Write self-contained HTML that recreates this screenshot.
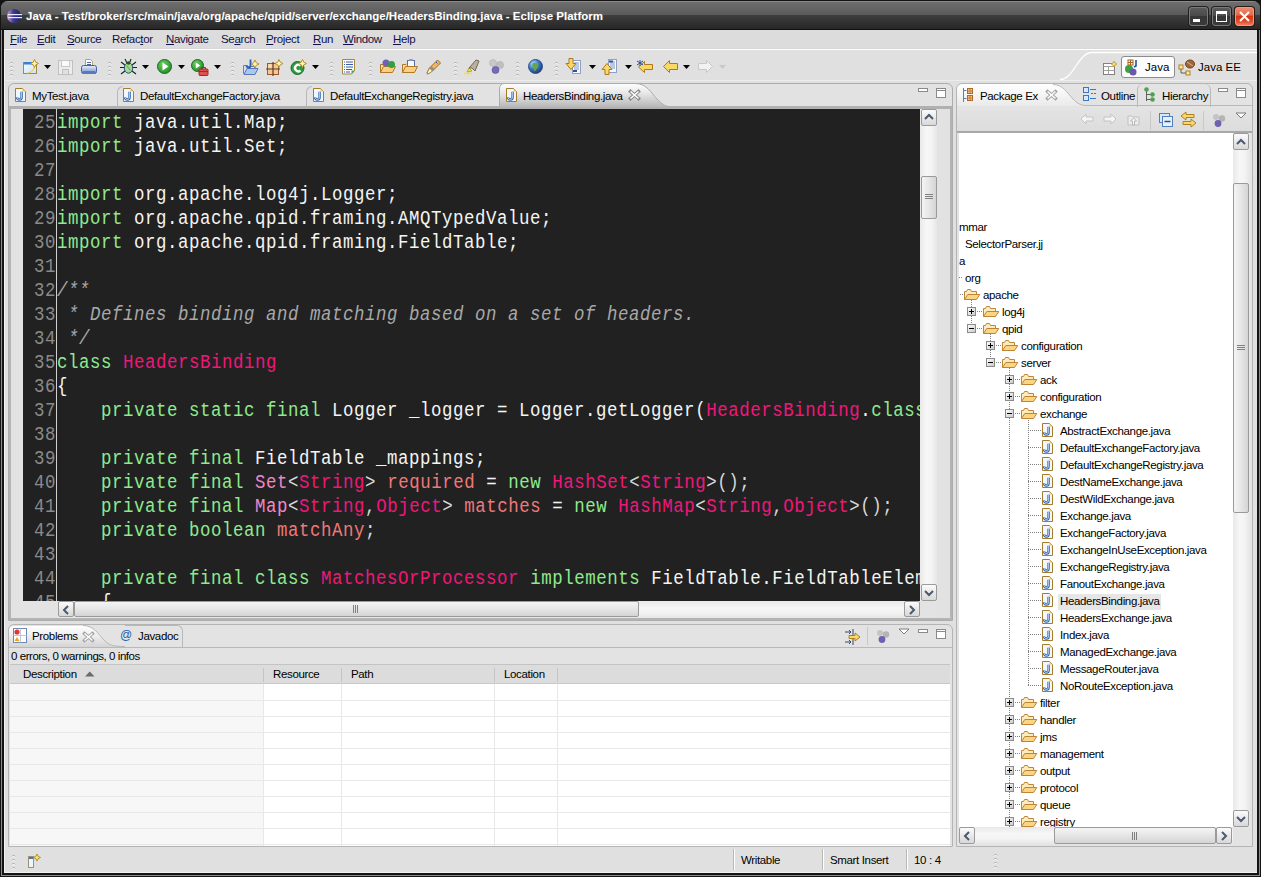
<!DOCTYPE html><html><head><meta charset="utf-8"><style>
*{margin:0;padding:0;box-sizing:border-box}
html,body{width:1261px;height:877px;overflow:hidden;background:#161616}
body{position:relative;font-family:"Liberation Sans",sans-serif;font-size:11px;color:#000;line-height:13px}
.a{position:absolute}
svg{position:absolute;overflow:visible}
.t{position:absolute;white-space:nowrap}
.code{position:absolute;font-family:"Liberation Mono",monospace;font-size:20px;letter-spacing:.644px;line-height:24px;white-space:pre;color:#f4f4f4;transform:scaleX(.87);transform-origin:0 0}
.k{color:#8eea8e}.c{color:#f0167a}.p{color:#f088c8}.f{color:#f07878}.cm{color:#a8a8a8;font-style:italic}.o{color:#d8d8d8}
.ln{position:absolute;font-family:"Liberation Mono",monospace;font-size:20px;letter-spacing:.644px;line-height:24px;white-space:pre;color:#8a8a8a;text-align:right;transform:scaleX(.87);transform-origin:100% 0}
.grip{position:absolute;width:3px;background:repeating-linear-gradient(#bdbdbd 0 1px,#ffffff 1px 2px,transparent 2px 4px)}
.dd{position:absolute;width:0;height:0;border-left:3px solid transparent;border-right:3px solid transparent;border-top:3px solid #000}
.sbv{position:absolute;background:linear-gradient(90deg,#e9e9e9,#f7f7f7 40%,#f3f3f3 70%,#e6e6e6)}
.sbh{position:absolute;background:linear-gradient(#e9e9e9,#f7f7f7 40%,#f3f3f3 70%,#e6e6e6)}
.btn{position:absolute;border:1px solid #9a9a9a;border-radius:2px;background:linear-gradient(#fbfbfb,#e9e9e9 50%,#d8d8d8)}
.thv{position:absolute;border:1px solid #9a9a9a;border-radius:2px;background:linear-gradient(90deg,#f4f4f4,#e6e6e6 50%,#d4d4d4)}
.thh{position:absolute;border:1px solid #9a9a9a;border-radius:2px;background:linear-gradient(#f4f4f4,#e6e6e6 50%,#d4d4d4)}
</style></head><body>
<div class="a" style="left:0;top:0;width:1261px;height:877px;background:#141414"></div>
<div class="a" style="left:1px;top:1px;width:1259px;height:875px;border:1px solid #8a8a8a;border-top:0;border-radius:7px 7px 0 0"></div>
<div class="a" style="left:1px;top:1px;width:1259px;height:29px;border-radius:7px 7px 0 0;background:linear-gradient(#8a8a8a 0 1px,#6e6e6e 1px,#5a5a5a 14px,#3e3e3e 14px,#262626 28px,#101010 28px 29px)"></div>
<svg style="left:7px;top:8px" width="16" height="16"><defs><linearGradient id="eg" x1="0" y1="0" x2="1" y2="0"><stop offset="0" stop-color="#d8a0d8"/><stop offset=".45" stop-color="#3a3a90"/><stop offset="1" stop-color="#20206a"/></linearGradient></defs><circle cx="7" cy="8" r="7" fill="url(#eg)"/><rect x="1" y="6" width="14" height="1.2" fill="#e8e8ff"/><rect x="1" y="9" width="14" height="1.2" fill="#e8e8ff"/></svg>
<div class="t" style="left:26px;top:10px;font-size:11.5px;font-weight:bold;color:#fff;line-height:13px;text-shadow:0 0 2px rgba(255,255,255,.2)">Java - Test/broker/src/main/java/org/apache/qpid/server/exchange/HeadersBinding.java - Eclipse Platform</div>
<div class="a" style="left:1189px;top:7px;width:19px;height:19px;border-radius:3px;border:1px solid #7a7a7a;box-shadow:0 0 0 1px #202020;background:linear-gradient(#5a5a5a,#4a4a4a 45%,#363636 50%,#3a3a3a)"></div>
<div class="a" style="left:1193px;top:19px;width:7px;height:3px;background:#fff"></div>
<div class="a" style="left:1212px;top:7px;width:19px;height:19px;border-radius:3px;border:1px solid #7a7a7a;box-shadow:0 0 0 1px #202020;background:linear-gradient(#5a5a5a,#4a4a4a 45%,#363636 50%,#3a3a3a)"></div>
<div class="a" style="left:1216px;top:11px;width:11px;height:11px;border:1.5px solid #fff;border-top-width:3px"></div>
<div class="a" style="left:1235px;top:7px;width:19px;height:19px;border-radius:3px;border:1px solid #f49a84;box-shadow:0 0 0 1px #2a1a14;background:linear-gradient(#ec8a70 0,#e46a4c 40%,#d83412 50%,#dc4a28 75%,#ec7a5c 100%)"></div>
<svg style="left:1239px;top:11px" width="11" height="11"><path d="M1 1L10 10M10 1L1 10" stroke="#fff" stroke-width="2"/></svg>
<div class="a" style="left:4px;top:30px;width:1253px;height:843px;background:#e0e0e0"></div>
<div class="a" style="left:4px;top:30px;width:1px;height:843px;background:#f2f2f2"></div>
<div class="a" style="left:4px;top:872px;width:1253px;height:1px;background:#f2f2f2"></div>
<div class="a" style="left:4px;top:80px;width:1253px;height:1px;background:#ececec"></div>
<div class="a" style="left:4px;top:30px;width:1253px;height:19px;background:#dcdcdc"></div>
<div class="a" style="left:4px;top:48px;width:1253px;height:1px;background:#d8d8d8"></div>
<div class="a" style="left:4px;top:49px;width:1253px;height:1px;background:#ffffff"></div>
<div class="t" style="left:10px;top:33px;font-size:11.5px;letter-spacing:-.35px;color:#10104a"><u>F</u>ile</div>
<div class="t" style="left:37px;top:33px;font-size:11.5px;letter-spacing:-.35px;color:#10104a"><u>E</u>dit</div>
<div class="t" style="left:67px;top:33px;font-size:11.5px;letter-spacing:-.35px;color:#10104a"><u>S</u>ource</div>
<div class="t" style="left:112px;top:33px;font-size:11.5px;letter-spacing:-.35px;color:#10104a">Refac<u>t</u>or</div>
<div class="t" style="left:166px;top:33px;font-size:11.5px;letter-spacing:-.35px;color:#10104a"><u>N</u>avigate</div>
<div class="t" style="left:221px;top:33px;font-size:11.5px;letter-spacing:-.35px;color:#10104a">Se<u>a</u>rch</div>
<div class="t" style="left:266px;top:33px;font-size:11.5px;letter-spacing:-.35px;color:#10104a"><u>P</u>roject</div>
<div class="t" style="left:313px;top:33px;font-size:11.5px;letter-spacing:-.35px;color:#10104a"><u>R</u>un</div>
<div class="t" style="left:343px;top:33px;font-size:11.5px;letter-spacing:-.35px;color:#10104a"><u>W</u>indow</div>
<div class="t" style="left:393px;top:33px;font-size:11.5px;letter-spacing:-.35px;color:#10104a"><u>H</u>elp</div>
<svg style="left:10px;top:60px" width="3" height="16"><path d="M0 3.5L1.5 2L3 3.5" stroke="#a4a4a4" stroke-width="1" fill="none"/><path d="M0 4.5L1.5 3L3 4.5" stroke="#ffffff" stroke-width="1" fill="none" opacity=".9"/><path d="M0 7.5L1.5 6L3 7.5" stroke="#a4a4a4" stroke-width="1" fill="none"/><path d="M0 8.5L1.5 7L3 8.5" stroke="#ffffff" stroke-width="1" fill="none" opacity=".9"/><path d="M0 11.5L1.5 10L3 11.5" stroke="#a4a4a4" stroke-width="1" fill="none"/><path d="M0 12.5L1.5 11L3 12.5" stroke="#ffffff" stroke-width="1" fill="none" opacity=".9"/><path d="M0 15.5L1.5 14L3 15.5" stroke="#a4a4a4" stroke-width="1" fill="none"/><path d="M0 16.5L1.5 15L3 16.5" stroke="#ffffff" stroke-width="1" fill="none" opacity=".9"/></svg>
<svg style="left:22px;top:59px" width="17" height="17" viewBox="0 0 17 17"><defs><linearGradient id="nw" x1="0" y1="0" x2="1" y2="1"><stop offset="0" stop-color="#f4fbff"/><stop offset="1" stop-color="#c8e4f8"/></linearGradient></defs><rect x="1.5" y="3.5" width="13" height="11" fill="url(#nw)" stroke="#a08850"/><rect x="2" y="3" width="10" height="2.5" fill="#3a80d0"/><path d="M13 5c0 5-3 9-8 9" stroke="#f0d060" fill="none" stroke-width="1.2"/><path d="M12.5 .5l1.3 2.7 2.7 1.3-2.7 1.3-1.3 2.7-1.3-2.7-2.7-1.3 2.7-1.3z" fill="#fff4b0" stroke="#b08818" stroke-width=".9"/></svg>
<svg style="left:44px;top:65px" width="7" height="4"><path d="M0 0H7L3.5 4Z" fill="#000"/></svg>
<svg style="left:58px;top:60px" width="16" height="16" viewBox="0 0 16 16"><rect x=".5" y=".5" width="14" height="14" fill="#ececec" stroke="#c0c0c0"/><rect x="3.5" y=".5" width="8" height="6" fill="#fafafa" stroke="#c8c8c8"/><rect x="4.5" y="9.5" width="6" height="5" fill="#e0e0e0" stroke="#c0c0c0"/></svg>
<svg style="left:81px;top:59px" width="16" height="17" viewBox="0 0 16 17"><defs><linearGradient id="pr" x1="0" y1="0" x2="0" y2="1"><stop offset="0" stop-color="#e8f0fc"/><stop offset="1" stop-color="#7090d0"/></linearGradient></defs><path d="M4.5 .5h5l2 2v5h-7z" fill="#fff" stroke="#c0a060"/><path d="M6 3.5h4M6 5.5h4" stroke="#4868a8"/><rect x=".5" y="6.5" width="15" height="8" rx="2" fill="url(#pr)" stroke="#4060a8"/><rect x="1.5" y="12" width="13" height="3" rx="1" fill="#5878c0"/></svg>
<svg style="left:108px;top:60px" width="3" height="16"><path d="M0 3.5L1.5 2L3 3.5" stroke="#a4a4a4" stroke-width="1" fill="none"/><path d="M0 4.5L1.5 3L3 4.5" stroke="#ffffff" stroke-width="1" fill="none" opacity=".9"/><path d="M0 7.5L1.5 6L3 7.5" stroke="#a4a4a4" stroke-width="1" fill="none"/><path d="M0 8.5L1.5 7L3 8.5" stroke="#ffffff" stroke-width="1" fill="none" opacity=".9"/><path d="M0 11.5L1.5 10L3 11.5" stroke="#a4a4a4" stroke-width="1" fill="none"/><path d="M0 12.5L1.5 11L3 12.5" stroke="#ffffff" stroke-width="1" fill="none" opacity=".9"/><path d="M0 15.5L1.5 14L3 15.5" stroke="#a4a4a4" stroke-width="1" fill="none"/><path d="M0 16.5L1.5 15L3 16.5" stroke="#ffffff" stroke-width="1" fill="none" opacity=".9"/></svg>
<svg style="left:120px;top:59px" width="17" height="17" viewBox="0 0 17 17"><g stroke="#102818" stroke-width="1.1" fill="none"><path d="M1 3l4 3M16 3l-4 3M0 8.5h4M13 8.5h4M1 15l4-3M16 15l-4-3M5 0l2 4M11 0l-1.5 4"/></g><ellipse cx="8.5" cy="9" rx="4.2" ry="5.2" fill="#a8d890" stroke="#205878"/><path d="M6.5 6.5l4 5" stroke="#70a860" stroke-width="1.2"/><circle cx="8.5" cy="4" r="1.8" fill="#305030"/></svg>
<svg style="left:142px;top:65px" width="7" height="4"><path d="M0 0H7L3.5 4Z" fill="#000"/></svg>
<svg style="left:157px;top:59px" width="15" height="15" viewBox="0 0 15 15"><defs><radialGradient id="rg" cx=".4" cy=".35" r=".7"><stop offset="0" stop-color="#70d060"/><stop offset="1" stop-color="#1e8a28"/></radialGradient></defs><circle cx="7.5" cy="7.5" r="7" fill="url(#rg)" stroke="#1a6a22"/><path d="M5.5 3.5v8l6-4z" fill="#fff"/></svg>
<svg style="left:178px;top:65px" width="7" height="4"><path d="M0 0H7L3.5 4Z" fill="#000"/></svg>
<svg style="left:191px;top:59px" width="18" height="17" viewBox="0 0 18 17"><defs><radialGradient id="rg2" cx=".4" cy=".35" r=".7"><stop offset="0" stop-color="#70d060"/><stop offset="1" stop-color="#1e8a28"/></radialGradient></defs><circle cx="6.5" cy="6.5" r="6" fill="url(#rg2)" stroke="#1a6a22"/><path d="M4.8 3.5v6l4.5-3z" fill="#fff"/><rect x="8" y="10" width="9" height="6.5" rx="1" fill="#e05050" stroke="#a02828"/><path d="M10.5 10v-1.5h4v1.5M8 12.5h9" stroke="#a02828" fill="none"/></svg>
<svg style="left:214px;top:65px" width="7" height="4"><path d="M0 0H7L3.5 4Z" fill="#000"/></svg>
<svg style="left:231px;top:60px" width="3" height="16"><path d="M0 3.5L1.5 2L3 3.5" stroke="#a4a4a4" stroke-width="1" fill="none"/><path d="M0 4.5L1.5 3L3 4.5" stroke="#ffffff" stroke-width="1" fill="none" opacity=".9"/><path d="M0 7.5L1.5 6L3 7.5" stroke="#a4a4a4" stroke-width="1" fill="none"/><path d="M0 8.5L1.5 7L3 8.5" stroke="#ffffff" stroke-width="1" fill="none" opacity=".9"/><path d="M0 11.5L1.5 10L3 11.5" stroke="#a4a4a4" stroke-width="1" fill="none"/><path d="M0 12.5L1.5 11L3 12.5" stroke="#ffffff" stroke-width="1" fill="none" opacity=".9"/><path d="M0 15.5L1.5 14L3 15.5" stroke="#a4a4a4" stroke-width="1" fill="none"/><path d="M0 16.5L1.5 15L3 16.5" stroke="#ffffff" stroke-width="1" fill="none" opacity=".9"/></svg>
<svg style="left:242px;top:59px" width="18" height="17" viewBox="0 0 18 17"><path d="M1.5 6.5h4l1 1h6v7h-11z" fill="#d0e0f8" stroke="#6080c0"/><path d="M2 15.5l3-6h11l-3 6z" fill="#a8c8f0" stroke="#5878b8"/><path d="M8.5 .5v6c0 1.5-1 2-2 2s-2-.5-2-2" stroke="#3060b0" stroke-width="1.8" fill="none"/><path d="M13 1l1.3 2.7 2.7 1.3-2.7 1.3-1.3 2.7-1.3-2.7-2.7-1.3 2.7-1.3z" fill="#fff4b0" stroke="#b08818" stroke-width=".9"/></svg>
<svg style="left:266px;top:59px" width="18" height="17" viewBox="0 0 18 17"><rect x="1.5" y="4.5" width="11" height="11" fill="#f0c898" stroke="#9a5a30"/><path d="M7 3v14M0 10h14" stroke="#6a3818" stroke-width="1.2"/><rect x="2.5" y="5.5" width="3" height="3" fill="#f8e0c0"/><path d="M13 .5l1.3 2.7 2.7 1.3-2.7 1.3-1.3 2.7-1.3-2.7-2.7-1.3 2.7-1.3z" fill="#fff4b0" stroke="#b08818" stroke-width=".9"/></svg>
<svg style="left:290px;top:59px" width="17" height="17" viewBox="0 0 17 17"><circle cx="7.5" cy="9" r="6.5" fill="#2e9a3e" stroke="#1a6a22"/><path d="M10.5 6.5a3.3 3.3 0 1 0 0 5" stroke="#fff" stroke-width="2.4" fill="none"/><path d="M12.5 .5l1.3 2.7 2.7 1.3-2.7 1.3-1.3 2.7-1.3-2.7-2.7-1.3 2.7-1.3z" fill="#fff4b0" stroke="#b08818" stroke-width=".9"/></svg>
<svg style="left:312px;top:65px" width="7" height="4"><path d="M0 0H7L3.5 4Z" fill="#000"/></svg>
<svg style="left:330px;top:60px" width="3" height="16"><path d="M0 3.5L1.5 2L3 3.5" stroke="#a4a4a4" stroke-width="1" fill="none"/><path d="M0 4.5L1.5 3L3 4.5" stroke="#ffffff" stroke-width="1" fill="none" opacity=".9"/><path d="M0 7.5L1.5 6L3 7.5" stroke="#a4a4a4" stroke-width="1" fill="none"/><path d="M0 8.5L1.5 7L3 8.5" stroke="#ffffff" stroke-width="1" fill="none" opacity=".9"/><path d="M0 11.5L1.5 10L3 11.5" stroke="#a4a4a4" stroke-width="1" fill="none"/><path d="M0 12.5L1.5 11L3 12.5" stroke="#ffffff" stroke-width="1" fill="none" opacity=".9"/><path d="M0 15.5L1.5 14L3 15.5" stroke="#a4a4a4" stroke-width="1" fill="none"/><path d="M0 16.5L1.5 15L3 16.5" stroke="#ffffff" stroke-width="1" fill="none" opacity=".9"/></svg>
<svg style="left:342px;top:59px" width="14" height="16" viewBox="0 0 14 16"><path d="M.5 .5h12v11l-3 3.5h-9z" fill="#fbfbff" stroke="#a88838"/><path d="M2 3h1M4 3h7M2 5.5h1M4 5.5h7M2 8h1M4 8h7M2 10.5h1M4 10.5h6M2 13h1M4 13h4" stroke="#3860a8"/><path d="M9.5 15v-3.5h3.5z" fill="#50a050"/></svg>
<svg style="left:369px;top:60px" width="3" height="16"><path d="M0 3.5L1.5 2L3 3.5" stroke="#a4a4a4" stroke-width="1" fill="none"/><path d="M0 4.5L1.5 3L3 4.5" stroke="#ffffff" stroke-width="1" fill="none" opacity=".9"/><path d="M0 7.5L1.5 6L3 7.5" stroke="#a4a4a4" stroke-width="1" fill="none"/><path d="M0 8.5L1.5 7L3 8.5" stroke="#ffffff" stroke-width="1" fill="none" opacity=".9"/><path d="M0 11.5L1.5 10L3 11.5" stroke="#a4a4a4" stroke-width="1" fill="none"/><path d="M0 12.5L1.5 11L3 12.5" stroke="#ffffff" stroke-width="1" fill="none" opacity=".9"/><path d="M0 15.5L1.5 14L3 15.5" stroke="#a4a4a4" stroke-width="1" fill="none"/><path d="M0 16.5L1.5 15L3 16.5" stroke="#ffffff" stroke-width="1" fill="none" opacity=".9"/></svg>
<svg style="left:380px;top:59px" width="17" height="16" viewBox="0 0 17 16"><path d="M.5 13.5V5.5H4L5 4.5h6v9z" fill="#f8dca0" stroke="#b07828"/><path d="M.5 13.5l3-6h12l-3 6z" fill="#f8d080" stroke="#b07828"/><circle cx="6" cy="4" r="3.5" fill="#7060b8"/><circle cx="11.5" cy="5.5" r="3.5" fill="#30a040"/></svg>
<svg style="left:402px;top:59px" width="17" height="16" viewBox="0 0 17 16"><path d="M.5 13.5V5.5H4L5 4.5h6v9z" fill="#f8dca0" stroke="#b07828"/><rect x="5.5" y="1.5" width="7" height="6" fill="#f4f8ff" stroke="#6070a0"/><rect x="7" y="0" width="4" height="2" rx="1" fill="#9098c0"/><path d="M.5 13.5l3-6h12l-3 6z" fill="#f8d080" stroke="#b07828"/></svg>
<svg style="left:425px;top:59px" width="17" height="16" viewBox="0 0 17 16"><path d="M2 14l2.5-5 8-8 3 3-8 8z" fill="#f0b860" stroke="#a06820"/><path d="M4.5 9l3 3-3.5 2.5-2 .5.5-2z" fill="#fff8d0" stroke="#a08040"/><path d="M5.5 8l3 3" stroke="#909090" stroke-width="2.5"/><path d="M11 3l1.5 1.5" stroke="#3050a0"/></svg>
<svg style="left:454px;top:60px" width="3" height="16"><path d="M0 3.5L1.5 2L3 3.5" stroke="#a4a4a4" stroke-width="1" fill="none"/><path d="M0 4.5L1.5 3L3 4.5" stroke="#ffffff" stroke-width="1" fill="none" opacity=".9"/><path d="M0 7.5L1.5 6L3 7.5" stroke="#a4a4a4" stroke-width="1" fill="none"/><path d="M0 8.5L1.5 7L3 8.5" stroke="#ffffff" stroke-width="1" fill="none" opacity=".9"/><path d="M0 11.5L1.5 10L3 11.5" stroke="#a4a4a4" stroke-width="1" fill="none"/><path d="M0 12.5L1.5 11L3 12.5" stroke="#ffffff" stroke-width="1" fill="none" opacity=".9"/><path d="M0 15.5L1.5 14L3 15.5" stroke="#a4a4a4" stroke-width="1" fill="none"/><path d="M0 16.5L1.5 15L3 16.5" stroke="#ffffff" stroke-width="1" fill="none" opacity=".9"/></svg>
<svg style="left:464px;top:59px" width="17" height="16" viewBox="0 0 17 16"><path d="M0 14.5h8" stroke="#f0e040" stroke-width="1.5"/><path d="M3 13l2-4 3 3z" fill="#f8e040" stroke="#b09820" stroke-width=".8"/><path d="M5 9l7-8 3 1-4 10-3-3z" fill="#b8b0a0" stroke="#706850"/></svg>
<svg style="left:489px;top:59px" width="15" height="15" viewBox="0 0 15 15"><circle cx="4" cy="4" r="3.5" fill="#c8c8c8" stroke="#b0b0b0" stroke-width=".6"/><circle cx="11" cy="6" r="3.5" fill="#c0c0c0" stroke="#a8a8a8" stroke-width=".6"/><circle cx="6.5" cy="11" r="3.5" fill="#7a68b8" stroke="#5a4a98" stroke-width=".6"/></svg>
<svg style="left:516px;top:60px" width="3" height="16"><path d="M0 3.5L1.5 2L3 3.5" stroke="#a4a4a4" stroke-width="1" fill="none"/><path d="M0 4.5L1.5 3L3 4.5" stroke="#ffffff" stroke-width="1" fill="none" opacity=".9"/><path d="M0 7.5L1.5 6L3 7.5" stroke="#a4a4a4" stroke-width="1" fill="none"/><path d="M0 8.5L1.5 7L3 8.5" stroke="#ffffff" stroke-width="1" fill="none" opacity=".9"/><path d="M0 11.5L1.5 10L3 11.5" stroke="#a4a4a4" stroke-width="1" fill="none"/><path d="M0 12.5L1.5 11L3 12.5" stroke="#ffffff" stroke-width="1" fill="none" opacity=".9"/><path d="M0 15.5L1.5 14L3 15.5" stroke="#a4a4a4" stroke-width="1" fill="none"/><path d="M0 16.5L1.5 15L3 16.5" stroke="#ffffff" stroke-width="1" fill="none" opacity=".9"/></svg>
<svg style="left:528px;top:59px" width="15" height="15" viewBox="0 0 15 15"><defs><radialGradient id="gl" cx=".35" cy=".3" r=".75"><stop offset="0" stop-color="#c0e0ff"/><stop offset=".5" stop-color="#3a78c8"/><stop offset="1" stop-color="#1a3a80"/></radialGradient></defs><circle cx="7.5" cy="7.5" r="7" fill="url(#gl)" stroke="#203c78" stroke-width=".8"/><path d="M5 4c2-1 3 1 4 0s2 2 1 4-2 3-3 4-1-3-2-4-1-3 0-4z" fill="#60a848"/><circle cx="9" cy="11" r=".8" fill="#c02020"/></svg>
<svg style="left:555px;top:60px" width="3" height="16"><path d="M0 3.5L1.5 2L3 3.5" stroke="#a4a4a4" stroke-width="1" fill="none"/><path d="M0 4.5L1.5 3L3 4.5" stroke="#ffffff" stroke-width="1" fill="none" opacity=".9"/><path d="M0 7.5L1.5 6L3 7.5" stroke="#a4a4a4" stroke-width="1" fill="none"/><path d="M0 8.5L1.5 7L3 8.5" stroke="#ffffff" stroke-width="1" fill="none" opacity=".9"/><path d="M0 11.5L1.5 10L3 11.5" stroke="#a4a4a4" stroke-width="1" fill="none"/><path d="M0 12.5L1.5 11L3 12.5" stroke="#ffffff" stroke-width="1" fill="none" opacity=".9"/><path d="M0 15.5L1.5 14L3 15.5" stroke="#a4a4a4" stroke-width="1" fill="none"/><path d="M0 16.5L1.5 15L3 16.5" stroke="#ffffff" stroke-width="1" fill="none" opacity=".9"/></svg>
<svg style="left:566px;top:58px" width="16" height="17" viewBox="0 0 16 17"><rect x="6.5" y="2.5" width="8" height="13" fill="#f4f8ff" stroke="#90a0c0"/><path d="M8 5h5M8 7h5M8 9h5M8 11h5" stroke="#8098c8"/><rect x="7" y="12" width="4" height="2" fill="#3050a0"/><path d="M3 .5h4v5h3l-5 6-5-6h3z" fill="#f8d868" stroke="#b07818"/></svg>
<svg style="left:589px;top:65px" width="7" height="4"><path d="M0 0H7L3.5 4Z" fill="#000"/></svg>
<svg style="left:602px;top:58px" width="16" height="17" viewBox="0 0 16 17"><rect x="6.5" y="1.5" width="8" height="13" fill="#f4f8ff" stroke="#90a0c0"/><path d="M8 4h5M8 6h5M8 8h5M8 10h5" stroke="#8098c8"/><rect x="7" y="2.5" width="4" height="2" fill="#3050a0"/><path d="M5 5.5l5 6h-3v5h-4v-5h-3z" fill="#f8d868" stroke="#b07818"/></svg>
<svg style="left:625px;top:65px" width="7" height="4"><path d="M0 0H7L3.5 4Z" fill="#000"/></svg>
<svg style="left:637px;top:60px" width="17" height="13" viewBox="0 0 17 13"><path d="M7.5 1.5v3h8v5h-8v3l-6-5.5z" fill="#f8d868" stroke="#b07818"/><path d="M3 0v6M0 1l6 4M6 1l-6 4" stroke="#2050a0" stroke-width="1"/></svg>
<svg style="left:663px;top:60px" width="15" height="13" viewBox="0 0 15 13"><path d="M6.5 .5v3h8v6h-8v3l-6-6z" fill="#f8d868" stroke="#b07818"/></svg>
<svg style="left:683px;top:65px" width="7" height="4"><path d="M0 0H7L3.5 4Z" fill="#000"/></svg>
<svg style="left:698px;top:60px" width="15" height="13" viewBox="0 0 15 13"><path d="M8.5 .5v3h-8v6h8v3l6-6z" fill="#f2f2f2" stroke="#c8c8c8"/></svg>
<svg style="left:719px;top:65px" width="7" height="4"><path d="M0 0H7L3.5 4Z" fill="#c8c8c8"/></svg>
<svg style="left:1060px;top:51px" width="200" height="33"><path d="M0 28.5 C14 28.5 18 1.5 32 1.5 H197" fill="none" stroke="#ffffff" stroke-width="1.3"/></svg>
<svg style="left:1102px;top:60px" width="16" height="16" viewBox="0 0 16 16"><rect x="1.5" y="3.5" width="11" height="11" fill="#fff" stroke="#808080"/><path d="M1.5 6.5h11M6.5 6.5v8M1.5 10.5h11" stroke="#a0a0a0"/><path d="M12 1l1 2 2 1-2 1-1 2-1-2-2-1 2-1z" fill="#f8e060" stroke="#c09020" stroke-width=".7"/></svg>
<div class="a" style="left:1121px;top:56px;width:54px;height:22px;border:1px solid #8c8c8c;border-radius:3px;background:#fdfdfd"></div>
<svg style="left:1124px;top:59px" width="18" height="17" viewBox="0 0 18 17"><rect x="4" y="1" width="5" height="5" fill="none" stroke="#a06020"/><path d="M6.5 1v5M4 3.5h5" stroke="#a06020"/><path d="M12 1v6l-2 1" stroke="#2050a0" stroke-width="1.6" fill="none"/><circle cx="5" cy="10" r="4" fill="#40a040"/><circle cx="9" cy="13" r="3.5" fill="#6a58b0"/></svg>
<div class="t" style="left:1145px;top:61px;font-size:11.5px">Java</div>
<svg style="left:1178px;top:59px" width="20" height="17" viewBox="0 0 20 17"><rect x="1" y="6" width="4" height="4" fill="#f8e8a0" stroke="#b08020"/><rect x="8" y="12" width="4" height="4" fill="#f8e8a0" stroke="#b08020"/><path d="M3 10v4h5" stroke="#606060" fill="none"/><ellipse cx="12" cy="5" rx="4.5" ry="4" fill="#a06838" stroke="#704018"/><path d="M9 3l6 4" stroke="#e0b080"/></svg>
<div class="t" style="left:1198px;top:61px;font-size:11.5px">Java EE</div>
<div class="a" style="left:8px;top:83px;width:945px;height:538px;border:1px solid #acacac;border-radius:6px 6px 0 0;background:#e2e2e2"></div>
<div class="a" style="left:9px;top:106px;width:943px;height:3px;background:#b0b0b0"></div>
<div class="a" style="left:9px;top:109px;width:2px;height:509px;background:#b4b4b4"></div>
<div class="a" style="left:950px;top:109px;width:2px;height:509px;background:#b4b4b4"></div>
<div class="a" style="left:9px;top:618px;width:943px;height:2px;background:#b4b4b4"></div>
<div class="a" style="left:11px;top:109px;width:12px;height:492px;background:#e2e2e2"></div>
<div class="a" style="left:11px;top:601px;width:47px;height:16px;background:#e3e3e3"></div>
<svg style="left:15px;top:88px" width="12" height="15" viewBox="0 0 12 15"><path d="M.5 .5h7l3 3v10h-10z" fill="#f2f6fe" stroke="#a67c2c"/><path d="M7.5 .5l3 3h-3z" fill="#f0c860"/><path d="M6.6 3.8v5.4a2.3 2.3 0 0 1-4.6 0" fill="none" stroke="#2a62aa" stroke-width="2.4"/><path d="M6.6 3.8v5.4a2.3 2.3 0 0 1-4.6 0" fill="none" stroke="#f2f6fe" stroke-width=".7"/></svg>
<div class="t" style="left:32px;top:90px;font-size:11.5px;letter-spacing:-.35px;color:#000">MyTest.java</div>
<div class="a" style="left:117px;top:86px;width:6px;height:20px;border-left:1px solid #b8b8b8;border-top:1px solid #b8b8b8;border-radius:6px 0 0 0"></div>
<svg style="left:123px;top:88px" width="12" height="15" viewBox="0 0 12 15"><path d="M.5 .5h7l3 3v10h-10z" fill="#f2f6fe" stroke="#a67c2c"/><path d="M7.5 .5l3 3h-3z" fill="#f0c860"/><path d="M6.6 3.8v5.4a2.3 2.3 0 0 1-4.6 0" fill="none" stroke="#2a62aa" stroke-width="2.4"/><path d="M6.6 3.8v5.4a2.3 2.3 0 0 1-4.6 0" fill="none" stroke="#f2f6fe" stroke-width=".7"/></svg>
<div class="t" style="left:140px;top:90px;font-size:11.5px;letter-spacing:-.35px;color:#000">DefaultExchangeFactory.java</div>
<div class="a" style="left:306px;top:86px;width:6px;height:20px;border-left:1px solid #b8b8b8;border-top:1px solid #b8b8b8;border-radius:6px 0 0 0"></div>
<svg style="left:313px;top:88px" width="12" height="15" viewBox="0 0 12 15"><path d="M.5 .5h7l3 3v10h-10z" fill="#f2f6fe" stroke="#a67c2c"/><path d="M7.5 .5l3 3h-3z" fill="#f0c860"/><path d="M6.6 3.8v5.4a2.3 2.3 0 0 1-4.6 0" fill="none" stroke="#2a62aa" stroke-width="2.4"/><path d="M6.6 3.8v5.4a2.3 2.3 0 0 1-4.6 0" fill="none" stroke="#f2f6fe" stroke-width=".7"/></svg>
<div class="t" style="left:330px;top:90px;font-size:11.5px;letter-spacing:-.35px;color:#000">DefaultExchangeRegistry.java</div>
<svg style="left:499px;top:83px" width="200" height="24"><defs><linearGradient id="atg" x1="0" y1="0" x2="0" y2="1"><stop offset="0" stop-color="#ffffff"/><stop offset=".4" stop-color="#e8e8e8"/><stop offset="1" stop-color="#b8b8b8"/></linearGradient></defs><path d="M0 24 V6 Q0 .5 6 .5 H136 C148 .5 152 10 158 16 C163 21 166 23.5 170 23.5 V24 Z" fill="url(#atg)"/><path d="M.5 24 V6 Q.5 .5 6 .5 H136 C148 .5 152 10 158 16 C163 21 166 23.5 170 23.5" fill="none" stroke="#acacac"/></svg>
<svg style="left:506px;top:88px" width="12" height="15" viewBox="0 0 12 15"><path d="M.5 .5h7l3 3v10h-10z" fill="#f2f6fe" stroke="#a67c2c"/><path d="M7.5 .5l3 3h-3z" fill="#f0c860"/><path d="M6.6 3.8v5.4a2.3 2.3 0 0 1-4.6 0" fill="none" stroke="#2a62aa" stroke-width="2.4"/><path d="M6.6 3.8v5.4a2.3 2.3 0 0 1-4.6 0" fill="none" stroke="#f2f6fe" stroke-width=".7"/></svg>
<div class="t" style="left:523px;top:90px;font-size:11.5px;letter-spacing:-.35px;color:#000">HeadersBinding.java</div>
<svg style="left:629px;top:90px" width="11" height="10" viewBox="0 0 11 10"><path d="M1.5 1.5l8 7M9.5 1.5l-8 7" stroke="#8a8a8a" stroke-width="3.4" stroke-linecap="square"/><path d="M1.5 1.5l8 7M9.5 1.5l-8 7" stroke="#fff" stroke-width="1.6"/></svg>
<div class="a" style="left:918px;top:88px;width:10px;height:4px;border:1px solid #8a8a8a;background:#fff"></div>
<div class="a" style="left:936px;top:88px;width:10px;height:10px;border:1px solid #8a8a8a;background:linear-gradient(#fff 0 1px,#8a8a8a 1px 2px,#fff 2px)"></div>
<div class="a" style="left:23px;top:109px;width:897px;height:492px;background:#212121;overflow:hidden">
<div class="a" style="left:33px;top:0;width:1px;height:492px;background:#d0d0d0"></div>
<div class="ln" style="left:0;top:2px;width:33px">25
26
27
28
29
30
31
32
33
34
35
36
37
38
39
40
41
42
43
44
45</div>
<div class="code" style="left:34px;top:2px"><span class="k">import</span> java.util.Map;
<span class="k">import</span> java.util.Set;

<span class="k">import</span> org.apache.log4j.Logger;
<span class="k">import</span> org.apache.qpid.framing.AMQTypedValue;
<span class="k">import</span> org.apache.qpid.framing.FieldTable;

<span class="cm">/**</span>
<span class="cm"> * Defines binding and matching based on a set of headers.</span>
<span class="cm"> */</span>
<span class="k">class</span> <span class="c">HeadersBinding</span>
{
    <span class="k">private static final</span> Logger _logger = Logger.getLogger(<span class="c">HeadersBinding</span>.<span class="k">class</span>

    <span class="k">private final</span> FieldTable _mappings;
    <span class="k">private final</span> <span class="p">Set</span><span class="o">&lt;</span><span class="c">String</span><span class="o">&gt;</span> <span class="f">required</span> = <span class="k">new</span> <span class="c">HashSet</span><span class="o">&lt;</span><span class="c">String</span><span class="o">&gt;();</span>
    <span class="k">private final</span> <span class="p">Map</span><span class="o">&lt;</span><span class="c">String</span><span class="o">,</span><span class="c">Object</span><span class="o">&gt;</span> <span class="f">matches</span> = <span class="k">new</span> <span class="c">HashMap</span><span class="o">&lt;</span><span class="c">String</span><span class="o">,</span><span class="c">Object</span><span class="o">&gt;();</span>
    <span class="k">private boolean</span> <span class="f">matchAny</span><span class="o">;</span>

    <span class="k">private final class</span> <span class="c">MatchesOrProcessor</span> <span class="k">implements</span> FieldTable.FieldTableElement
    {</div>
</div>
<div class="sbv" style="left:920px;top:109px;width:17px;height:492px"></div>
<div class="btn" style="left:921px;top:109px;width:16px;height:17px"></div>
<svg style="left:924px;top:113px" width="10" height="8" viewBox="0 0 10 8"><path d="M1 6l4-4 4 4" stroke="#4a5870" stroke-width="2" fill="none"/></svg>
<div class="thv" style="left:921px;top:176px;width:16px;height:43px"></div>
<svg style="left:925px;top:194px" width="8" height="6" viewBox="0 0 8 6"><path d="M0 .5h8M0 2.5h8M0 4.5h8" stroke="#808080"/></svg>
<div class="btn" style="left:921px;top:584px;width:16px;height:17px"></div>
<svg style="left:924px;top:589px" width="10" height="8" viewBox="0 0 10 8"><path d="M1 2l4 4 4-4" stroke="#4a5870" stroke-width="2" fill="none"/></svg>
<div class="a" style="left:937px;top:109px;width:13px;height:509px;background:#e2e2e2"></div>
<div class="a" style="left:920px;top:601px;width:17px;height:16px;background:#e3e3e3"></div>
<div class="sbh" style="left:58px;top:601px;width:862px;height:17px"></div>
<div class="btn" style="left:58px;top:601px;width:16px;height:16px"></div>
<svg style="left:62px;top:605px" width="8" height="10" viewBox="0 0 8 10"><path d="M6 1l-4 4 4 4" stroke="#4a5870" stroke-width="2" fill="none"/></svg>
<div class="thh" style="left:74px;top:601px;width:565px;height:16px"></div>
<svg style="left:353px;top:605px" width="6" height="8" viewBox="0 0 6 8"><path d="M.5 0v8M2.5 0v8M4.5 0v8" stroke="#808080"/></svg>
<div class="btn" style="left:904px;top:601px;width:16px;height:16px"></div>
<svg style="left:908px;top:605px" width="8" height="10" viewBox="0 0 8 10"><path d="M2 1l4 4-4 4" stroke="#4a5870" stroke-width="2" fill="none"/></svg>
<div class="a" style="left:8px;top:624px;width:945px;height:223px;border:1px solid #b4b4b4;border-radius:6px 6px 0 0;background:#e3e3e3"></div>
<div class="a" style="left:9px;top:647px;width:943px;height:1px;background:#b8b8b8"></div>
<svg style="left:9px;top:625px" width="130" height="23"><defs><linearGradient id="ptg" x1="0" y1="0" x2="0" y2="1"><stop offset="0" stop-color="#ffffff"/><stop offset=".5" stop-color="#ececec"/><stop offset="1" stop-color="#d4d4d4"/></linearGradient></defs><path d="M0 22 V6 Q0 1 6 1 H74 C85 1 89 9 95 15 C100 20 103 22 116 22 Z" fill="url(#ptg)"/><path d="M74 .5 C85 .5 89 9 95 15 C100 20 103 21.5 116 21.5" fill="none" stroke="#b8b8b8"/></svg>
<svg style="left:13px;top:628px" width="15" height="15" viewBox="0 0 15 15"><rect x=".5" y=".5" width="13" height="14" fill="#fff" stroke="#7088b0"/><path d="M.5 7.5h13M7.5 .5v14" stroke="#c0c8d8"/><circle cx="4" cy="4" r="2.6" fill="#e03838"/><path d="M1.5 13l2.5-4 2.5 4z" fill="#f0a020"/></svg>
<div class="t" style="left:32px;top:630px;font-size:11.5px;letter-spacing:-.35px">Problems</div>
<svg style="left:83px;top:632px" width="11" height="10" viewBox="0 0 11 10"><path d="M1.5 1.5l8 7M9.5 1.5l-8 7" stroke="#a0a0a0" stroke-width="3.2" stroke-linecap="square"/><path d="M1.5 1.5l8 7M9.5 1.5l-8 7" stroke="#fff" stroke-width="1.5"/></svg>
<div class="a" style="left:125px;top:625px;width:58px;height:23px;border-right:1px solid #b8b8b8;border-top:1px solid #b8b8b8;border-radius:0 6px 0 0"></div>
<div class="t" style="left:120px;top:629px;font-size:12px;color:#2060b0">@</div>
<div class="t" style="left:138px;top:630px;font-size:11.5px;letter-spacing:-.35px">Javadoc</div>
<svg style="left:845px;top:629px" width="16" height="16" viewBox="0 0 16 16"><path d="M0 3h6M4 1l2 2-2 2M8 0v6M0 13h6M4 11l2 2-2 2M8 10v6" stroke="#304870" fill="none"/><path d="M4 6.5h6v-2.5l5 4-5 4v-2.5h-6z" fill="#f8d868" stroke="#b08020"/></svg>
<div class="a" style="left:867px;top:627px;width:1px;height:18px;background:#c8c8c8"></div>
<svg style="left:876px;top:629px" width="15" height="15" viewBox="0 0 15 15"><circle cx="4" cy="4" r="3" fill="#c4c4c4"/><circle cx="10" cy="5.5" r="3.2" fill="#b4b4b4"/><circle cx="6" cy="10.5" r="3.4" fill="#7060b0"/></svg>
<svg style="left:898px;top:628px" width="12" height="7" viewBox="0 0 12 7"><path d="M1 1h10l-5 5z" fill="#fff" stroke="#7a7a7a"/></svg>
<div class="a" style="left:918px;top:629px;width:10px;height:4px;border:1px solid #8a8a8a;background:#fff"></div>
<div class="a" style="left:936px;top:629px;width:10px;height:10px;border:1px solid #8a8a8a;background:linear-gradient(#fff 0 1px,#8a8a8a 1px 2px,#fff 2px)"></div>
<div class="t" style="left:11px;top:650px;font-size:11.5px;letter-spacing:-.45px">0 errors, 0 warnings, 0 infos</div>
<div class="a" style="left:10px;top:664px;width:940px;height:182px;background:#ffffff;border-top:1px solid #c4c4c4"></div>
<div class="a" style="left:10px;top:665px;width:940px;height:19px;background:#dcdcdc;border-bottom:1px solid #c8c8c8"></div>
<div class="a" style="left:10px;top:684px;width:253px;height:162px;background:#f7f7f7"></div>
<div class="a" style="left:10px;top:700px;width:940px;height:1px;background:#e8e8e8"></div>
<div class="a" style="left:10px;top:716px;width:940px;height:1px;background:#e8e8e8"></div>
<div class="a" style="left:10px;top:732px;width:940px;height:1px;background:#e8e8e8"></div>
<div class="a" style="left:10px;top:748px;width:940px;height:1px;background:#e8e8e8"></div>
<div class="a" style="left:10px;top:764px;width:940px;height:1px;background:#e8e8e8"></div>
<div class="a" style="left:10px;top:780px;width:940px;height:1px;background:#e8e8e8"></div>
<div class="a" style="left:10px;top:796px;width:940px;height:1px;background:#e8e8e8"></div>
<div class="a" style="left:10px;top:812px;width:940px;height:1px;background:#e8e8e8"></div>
<div class="a" style="left:10px;top:828px;width:940px;height:1px;background:#e8e8e8"></div>
<div class="a" style="left:10px;top:844px;width:940px;height:1px;background:#e8e8e8"></div>
<div class="a" style="left:263px;top:684px;width:1px;height:162px;background:#e8e8e8"></div>
<div class="a" style="left:263px;top:668px;width:1px;height:14px;background:#c4c4c4"></div>
<div class="a" style="left:341px;top:684px;width:1px;height:162px;background:#e8e8e8"></div>
<div class="a" style="left:341px;top:668px;width:1px;height:14px;background:#c4c4c4"></div>
<div class="a" style="left:494px;top:684px;width:1px;height:162px;background:#e8e8e8"></div>
<div class="a" style="left:494px;top:668px;width:1px;height:14px;background:#c4c4c4"></div>
<div class="a" style="left:557px;top:684px;width:1px;height:162px;background:#e8e8e8"></div>
<div class="a" style="left:557px;top:668px;width:1px;height:14px;background:#c4c4c4"></div>
<div class="t" style="left:23px;top:668px;font-size:11.5px;letter-spacing:-.35px">Description</div>
<div class="t" style="left:273px;top:668px;font-size:11.5px;letter-spacing:-.35px">Resource</div>
<div class="t" style="left:351px;top:668px;font-size:11.5px;letter-spacing:-.35px">Path</div>
<div class="t" style="left:504px;top:668px;font-size:11.5px;letter-spacing:-.35px">Location</div>
<svg style="left:85px;top:671px" width="10" height="6" viewBox="0 0 10 6"><path d="M0 5.5l4.75-5 4.75 5z" fill="#6a6a6a"/></svg>
<svg style="left:12px;top:853px" width="3" height="16"><path d="M0 3.5L1.5 2L3 3.5" stroke="#a4a4a4" stroke-width="1" fill="none"/><path d="M0 4.5L1.5 3L3 4.5" stroke="#ffffff" stroke-width="1" fill="none" opacity=".9"/><path d="M0 7.5L1.5 6L3 7.5" stroke="#a4a4a4" stroke-width="1" fill="none"/><path d="M0 8.5L1.5 7L3 8.5" stroke="#ffffff" stroke-width="1" fill="none" opacity=".9"/><path d="M0 11.5L1.5 10L3 11.5" stroke="#a4a4a4" stroke-width="1" fill="none"/><path d="M0 12.5L1.5 11L3 12.5" stroke="#ffffff" stroke-width="1" fill="none" opacity=".9"/><path d="M0 15.5L1.5 14L3 15.5" stroke="#a4a4a4" stroke-width="1" fill="none"/><path d="M0 16.5L1.5 15L3 16.5" stroke="#ffffff" stroke-width="1" fill="none" opacity=".9"/></svg>
<svg style="left:27px;top:853px" width="16" height="16" viewBox="0 0 16 16"><rect x="1.5" y="3.5" width="5" height="11" fill="#e8f8fc" stroke="#a09070"/><rect x="2" y="4" width="4" height="2" fill="#3a7ac8"/><path d="M10 1l1.2 2.3 2.3 1.2-2.3 1.2-1.2 2.3-1.2-2.3-2.3-1.2 2.3-1.2z" fill="#f8e060" stroke="#a08010" stroke-width=".8"/></svg>
<div class="a" style="left:733px;top:849px;width:1px;height:21px;background:#b8b8b8"></div>
<div class="a" style="left:734px;top:849px;width:1px;height:21px;background:#fff"></div>
<div class="a" style="left:822px;top:849px;width:1px;height:21px;background:#b8b8b8"></div>
<div class="a" style="left:823px;top:849px;width:1px;height:21px;background:#fff"></div>
<div class="a" style="left:906px;top:849px;width:1px;height:21px;background:#b8b8b8"></div>
<div class="a" style="left:907px;top:849px;width:1px;height:21px;background:#fff"></div>
<div class="t" style="left:741px;top:854px;font-size:11.5px;letter-spacing:-.35px">Writable</div>
<div class="t" style="left:830px;top:854px;font-size:11.5px;letter-spacing:-.35px">Smart Insert</div>
<div class="t" style="left:914px;top:854px;font-size:11.5px;letter-spacing:-.35px">10 : 4</div>
<div class="a" style="left:956px;top:83px;width:297px;height:764px;border:1px solid #b4b4b4;border-radius:6px 6px 0 0;background:#e3e3e3"></div>
<svg style="left:957px;top:84px" width="295" height="48"><defs><linearGradient id="pex" x1="0" y1="0" x2="0" y2="1"><stop offset="0" stop-color="#ffffff"/><stop offset=".5" stop-color="#e8e8e8"/><stop offset="1" stop-color="#dcdcdc"/></linearGradient></defs><path d="M0 48 V6 Q0 0 6 0 H96 C106 0 110 9 116 15 C121 20 124 22 130 22 H295 V48 Z" fill="url(#pex)"/><path d="M96 .5 C106 .5 110 9 116 15 C121 20 124 21.5 130 21.5 H295" fill="none" stroke="#b8b8b8"/></svg>
<div class="a" style="left:957px;top:106px;width:295px;height:26px;background:linear-gradient(#e4e4e4,#dcdcdc)"></div>
<div class="a" style="left:957px;top:131px;width:295px;height:2px;background:#a8a8a8"></div>
<svg style="left:963px;top:88px" width="11" height="14" viewBox="0 0 11 14"><path d="M.5 0v14M.5 2.5h3M.5 10.5h3" stroke="#6a7a98"/><rect x="4.5" y=".5" width="5" height="5" fill="#f0c080" stroke="#b06a28"/><path d="M7 .5v5M4.5 3h5" stroke="#b06a28" stroke-width=".7"/><rect x="4.5" y="7.5" width="5" height="5" fill="#f0c080" stroke="#b06a28"/><path d="M7 7.5v5M4.5 10h5" stroke="#b06a28" stroke-width=".7"/></svg>
<div class="t" style="left:980px;top:90px;font-size:11.5px;letter-spacing:-.35px">Package Ex</div>
<svg style="left:1046px;top:90px" width="11" height="10" viewBox="0 0 11 10"><path d="M1.5 1.5l8 7M9.5 1.5l-8 7" stroke="#a0a0a0" stroke-width="3.2" stroke-linecap="square"/><path d="M1.5 1.5l8 7M9.5 1.5l-8 7" stroke="#fff" stroke-width="1.5"/></svg>
<svg style="left:1083px;top:87px" width="14" height="14" viewBox="0 0 14 14"><rect x=".5" y=".5" width="5" height="5" fill="#d8e8fc" stroke="#3878c8"/><rect x=".5" y="8.5" width="5" height="5" fill="#d8e8fc" stroke="#3878c8"/><path d="M7 2.5h6M8 6.5h2M11 6.5h2M7 11.5h6" stroke="#3878c8"/></svg>
<div class="t" style="left:1101px;top:90px;font-size:11.5px;letter-spacing:-.35px">Outline</div>
<div class="a" style="left:1137px;top:84px;width:74px;height:23px;border-left:1px solid #b8b8b8;border-right:1px solid #b8b8b8;border-radius:6px 6px 0 0"></div>
<svg style="left:1144px;top:87px" width="12" height="15" viewBox="0 0 12 15"><path d="M2.5 2v12M2.5 7.5h5M2.5 12.5h5" stroke="#606060"/><circle cx="2.5" cy="2.5" r="2.3" fill="#50a050"/><circle cx="8.5" cy="7.5" r="2.3" fill="#50a050"/><circle cx="8.5" cy="12.5" r="2.3" fill="#50a050"/></svg>
<div class="t" style="left:1162px;top:90px;font-size:11.5px;letter-spacing:-.35px">Hierarchy</div>
<div class="a" style="left:1218px;top:88px;width:10px;height:4px;border:1px solid #8a8a8a;background:#fff"></div>
<div class="a" style="left:1236px;top:88px;width:10px;height:10px;border:1px solid #8a8a8a;background:linear-gradient(#fff 0 1px,#8a8a8a 1px 2px,#fff 2px)"></div>
<svg style="left:1080px;top:113px" width="14" height="12" viewBox="0 0 14 12"><path d="M6 1v3h7v4h-7v3l-5-5z" fill="#f4f4f4" stroke="#c4c4c4"/></svg>
<svg style="left:1103px;top:113px" width="14" height="12" viewBox="0 0 14 12"><path d="M8 1v3h-7v4h7v3l5-5z" fill="#f4f4f4" stroke="#c4c4c4"/></svg>
<svg style="left:1127px;top:113px" width="14" height="14" viewBox="0 0 14 14"><path d="M1 3h4l1 1h6v8h-11z" fill="#ececec" stroke="#c0c0c0"/><path d="M6.5 5l3 3h-2v4h-2v-4h-2z" fill="#f8f8f8" stroke="#b8b8b8"/></svg>
<div class="a" style="left:1150px;top:111px;width:1px;height:19px;background:#c8c8c8"></div>
<svg style="left:1159px;top:113px" width="14" height="14" viewBox="0 0 14 14"><rect x=".5" y=".5" width="10" height="9" fill="#d8e8fc" stroke="#5080c0"/><rect x="3.5" y="3.5" width="10" height="10" fill="#e8f0fc" stroke="#5080c0"/><path d="M5.5 8.5h6" stroke="#2050a0" stroke-width="1.5"/></svg>
<svg style="left:1180px;top:111px" width="17" height="17" viewBox="0 0 17 17"><path d="M6 1l-5 4 5 4v-2.5h8v-3h-8z" fill="#f8d868" stroke="#b08020"/><path d="M11 8l5 4-5 4v-2.5h-8v-3h8z" fill="#f8d868" stroke="#b08020"/></svg>
<div class="a" style="left:1203px;top:111px;width:1px;height:19px;background:#c8c8c8"></div>
<svg style="left:1212px;top:113px" width="15" height="15" viewBox="0 0 15 15"><circle cx="4" cy="4" r="3" fill="#c4c4c4"/><circle cx="10" cy="5.5" r="3.2" fill="#b4b4b4"/><circle cx="6" cy="10.5" r="3.4" fill="#7060b0"/></svg>
<svg style="left:1235px;top:112px" width="12" height="7" viewBox="0 0 12 7"><path d="M1 1h10l-5 5z" fill="#fff" stroke="#7a7a7a"/></svg>
<div class="a" style="left:959px;top:133px;width:274px;height:694px;background:#fff;overflow:hidden">
<div class="t" style="left:0px;top:88px;font-size:11.5px;letter-spacing:-.35px">mmar</div><div class="t" style="left:6px;top:105px;font-size:11.5px;letter-spacing:-.35px">SelectorParser.jj</div><div class="t" style="left:0px;top:122px;font-size:11.5px;letter-spacing:-.35px">a</div><div class="a" style="left:0px;top:144px;width:3px;height:1px;background:repeating-linear-gradient(90deg,#808080 0 1px,transparent 1px 2px)"></div><div class="t" style="left:6px;top:139px;font-size:11.5px;letter-spacing:-.35px">org</div><div class="a" style="left:12px;top:167px;width:1px;height:24px;background:repeating-linear-gradient(#808080 0 1px,transparent 1px 2px)"></div><div class="a" style="left:31px;top:201px;width:1px;height:24px;background:repeating-linear-gradient(#808080 0 1px,transparent 1px 2px)"></div><div class="a" style="left:50px;top:235px;width:1px;height:459px;background:repeating-linear-gradient(#808080 0 1px,transparent 1px 2px)"></div><div class="a" style="left:69px;top:287px;width:1px;height:266px;background:repeating-linear-gradient(#808080 0 1px,transparent 1px 2px)"></div><div class="a" style="left:-7px;top:161px;width:12px;height:1px;background:repeating-linear-gradient(90deg,#808080 0 1px,transparent 1px 2px)"></div><svg style="left:5px;top:156px" width="17" height="12"><path d="M.5 10.5V2.5H2.5L3.5 .5H6.5L7.5 2.5H12.5V5.5" fill="#fbecc0" stroke="#c08434"/><path d="M.5 10.5L3.8 5.5H15.8L12.5 10.5Z" fill="#fad684" stroke="#c08434"/></svg><div class="t" style="left:24px;top:156px;font-size:11.5px;letter-spacing:-.35px">apache</div><svg style="left:8px;top:174px" width="9" height="9"><defs><linearGradient id="pmg" x1="0" y1="0" x2="1" y2="1"><stop offset="0" stop-color="#fff"/><stop offset="1" stop-color="#c8c8c8"/></linearGradient></defs><rect x=".5" y=".5" width="8" height="8" fill="url(#pmg)" stroke="#8a8a8a"/><path d="M2 4.5h5" stroke="#000"/><path d="M4.5 2v5" stroke="#000"/></svg><div class="a" style="left:18px;top:178px;width:6px;height:1px;background:repeating-linear-gradient(90deg,#808080 0 1px,transparent 1px 2px)"></div><svg style="left:24px;top:173px" width="17" height="12"><path d="M.5 10.5V2.5H2.5L3.5 .5H6.5L7.5 2.5H12.5V5.5" fill="#fbecc0" stroke="#c08434"/><path d="M.5 10.5L3.8 5.5H15.8L12.5 10.5Z" fill="#fad684" stroke="#c08434"/></svg><div class="t" style="left:43px;top:173px;font-size:11.5px;letter-spacing:-.35px">log4j</div><svg style="left:8px;top:191px" width="9" height="9"><defs><linearGradient id="pmg" x1="0" y1="0" x2="1" y2="1"><stop offset="0" stop-color="#fff"/><stop offset="1" stop-color="#c8c8c8"/></linearGradient></defs><rect x=".5" y=".5" width="8" height="8" fill="url(#pmg)" stroke="#8a8a8a"/><path d="M2 4.5h5" stroke="#000"/></svg><div class="a" style="left:18px;top:195px;width:6px;height:1px;background:repeating-linear-gradient(90deg,#808080 0 1px,transparent 1px 2px)"></div><svg style="left:24px;top:190px" width="17" height="12"><path d="M.5 10.5V2.5H2.5L3.5 .5H6.5L7.5 2.5H12.5V5.5" fill="#fbecc0" stroke="#c08434"/><path d="M.5 10.5L3.8 5.5H15.8L12.5 10.5Z" fill="#fad684" stroke="#c08434"/></svg><div class="t" style="left:43px;top:190px;font-size:11.5px;letter-spacing:-.35px">qpid</div><svg style="left:27px;top:208px" width="9" height="9"><defs><linearGradient id="pmg" x1="0" y1="0" x2="1" y2="1"><stop offset="0" stop-color="#fff"/><stop offset="1" stop-color="#c8c8c8"/></linearGradient></defs><rect x=".5" y=".5" width="8" height="8" fill="url(#pmg)" stroke="#8a8a8a"/><path d="M2 4.5h5" stroke="#000"/><path d="M4.5 2v5" stroke="#000"/></svg><div class="a" style="left:37px;top:212px;width:6px;height:1px;background:repeating-linear-gradient(90deg,#808080 0 1px,transparent 1px 2px)"></div><svg style="left:43px;top:207px" width="17" height="12"><path d="M.5 10.5V2.5H2.5L3.5 .5H6.5L7.5 2.5H12.5V5.5" fill="#fbecc0" stroke="#c08434"/><path d="M.5 10.5L3.8 5.5H15.8L12.5 10.5Z" fill="#fad684" stroke="#c08434"/></svg><div class="t" style="left:62px;top:207px;font-size:11.5px;letter-spacing:-.35px">configuration</div><svg style="left:27px;top:225px" width="9" height="9"><defs><linearGradient id="pmg" x1="0" y1="0" x2="1" y2="1"><stop offset="0" stop-color="#fff"/><stop offset="1" stop-color="#c8c8c8"/></linearGradient></defs><rect x=".5" y=".5" width="8" height="8" fill="url(#pmg)" stroke="#8a8a8a"/><path d="M2 4.5h5" stroke="#000"/></svg><div class="a" style="left:37px;top:229px;width:6px;height:1px;background:repeating-linear-gradient(90deg,#808080 0 1px,transparent 1px 2px)"></div><svg style="left:43px;top:224px" width="17" height="12"><path d="M.5 10.5V2.5H2.5L3.5 .5H6.5L7.5 2.5H12.5V5.5" fill="#fbecc0" stroke="#c08434"/><path d="M.5 10.5L3.8 5.5H15.8L12.5 10.5Z" fill="#fad684" stroke="#c08434"/></svg><div class="t" style="left:62px;top:224px;font-size:11.5px;letter-spacing:-.35px">server</div><svg style="left:46px;top:242px" width="9" height="9"><defs><linearGradient id="pmg" x1="0" y1="0" x2="1" y2="1"><stop offset="0" stop-color="#fff"/><stop offset="1" stop-color="#c8c8c8"/></linearGradient></defs><rect x=".5" y=".5" width="8" height="8" fill="url(#pmg)" stroke="#8a8a8a"/><path d="M2 4.5h5" stroke="#000"/><path d="M4.5 2v5" stroke="#000"/></svg><div class="a" style="left:56px;top:246px;width:6px;height:1px;background:repeating-linear-gradient(90deg,#808080 0 1px,transparent 1px 2px)"></div><svg style="left:62px;top:241px" width="17" height="12"><path d="M.5 10.5V2.5H2.5L3.5 .5H6.5L7.5 2.5H12.5V5.5" fill="#fbecc0" stroke="#c08434"/><path d="M.5 10.5L3.8 5.5H15.8L12.5 10.5Z" fill="#fad684" stroke="#c08434"/></svg><div class="t" style="left:81px;top:241px;font-size:11.5px;letter-spacing:-.35px">ack</div><svg style="left:46px;top:259px" width="9" height="9"><defs><linearGradient id="pmg" x1="0" y1="0" x2="1" y2="1"><stop offset="0" stop-color="#fff"/><stop offset="1" stop-color="#c8c8c8"/></linearGradient></defs><rect x=".5" y=".5" width="8" height="8" fill="url(#pmg)" stroke="#8a8a8a"/><path d="M2 4.5h5" stroke="#000"/><path d="M4.5 2v5" stroke="#000"/></svg><div class="a" style="left:56px;top:263px;width:6px;height:1px;background:repeating-linear-gradient(90deg,#808080 0 1px,transparent 1px 2px)"></div><svg style="left:62px;top:258px" width="17" height="12"><path d="M.5 10.5V2.5H2.5L3.5 .5H6.5L7.5 2.5H12.5V5.5" fill="#fbecc0" stroke="#c08434"/><path d="M.5 10.5L3.8 5.5H15.8L12.5 10.5Z" fill="#fad684" stroke="#c08434"/></svg><div class="t" style="left:81px;top:258px;font-size:11.5px;letter-spacing:-.35px">configuration</div><svg style="left:46px;top:276px" width="9" height="9"><defs><linearGradient id="pmg" x1="0" y1="0" x2="1" y2="1"><stop offset="0" stop-color="#fff"/><stop offset="1" stop-color="#c8c8c8"/></linearGradient></defs><rect x=".5" y=".5" width="8" height="8" fill="url(#pmg)" stroke="#8a8a8a"/><path d="M2 4.5h5" stroke="#000"/></svg><div class="a" style="left:56px;top:280px;width:6px;height:1px;background:repeating-linear-gradient(90deg,#808080 0 1px,transparent 1px 2px)"></div><svg style="left:62px;top:275px" width="17" height="12"><path d="M.5 10.5V2.5H2.5L3.5 .5H6.5L7.5 2.5H12.5V5.5" fill="#fbecc0" stroke="#c08434"/><path d="M.5 10.5L3.8 5.5H15.8L12.5 10.5Z" fill="#fad684" stroke="#c08434"/></svg><div class="t" style="left:81px;top:275px;font-size:11.5px;letter-spacing:-.35px">exchange</div><div class="a" style="left:69px;top:297px;width:13px;height:1px;background:repeating-linear-gradient(90deg,#808080 0 1px,transparent 1px 2px)"></div><svg style="left:83px;top:290px" width="12" height="15"><path d="M.5 .5h7l3 3v10h-10z" fill="#f2f6fe" stroke="#a67c2c"/><path d="M7.5 .5l3 3h-3z" fill="#f0c860"/><path d="M6.6 3.8v5.4a2.3 2.3 0 0 1-4.6 0" fill="none" stroke="#2a62aa" stroke-width="2.4"/><path d="M6.6 3.8v5.4a2.3 2.3 0 0 1-4.6 0" fill="none" stroke="#f2f6fe" stroke-width=".7"/></svg><div class="t" style="left:101px;top:292px;font-size:11.5px;letter-spacing:-.35px">AbstractExchange.java</div><div class="a" style="left:69px;top:314px;width:13px;height:1px;background:repeating-linear-gradient(90deg,#808080 0 1px,transparent 1px 2px)"></div><svg style="left:83px;top:307px" width="12" height="15"><path d="M.5 .5h7l3 3v10h-10z" fill="#f2f6fe" stroke="#a67c2c"/><path d="M7.5 .5l3 3h-3z" fill="#f0c860"/><path d="M6.6 3.8v5.4a2.3 2.3 0 0 1-4.6 0" fill="none" stroke="#2a62aa" stroke-width="2.4"/><path d="M6.6 3.8v5.4a2.3 2.3 0 0 1-4.6 0" fill="none" stroke="#f2f6fe" stroke-width=".7"/></svg><div class="t" style="left:101px;top:309px;font-size:11.5px;letter-spacing:-.35px">DefaultExchangeFactory.java</div><div class="a" style="left:69px;top:331px;width:13px;height:1px;background:repeating-linear-gradient(90deg,#808080 0 1px,transparent 1px 2px)"></div><svg style="left:83px;top:324px" width="12" height="15"><path d="M.5 .5h7l3 3v10h-10z" fill="#f2f6fe" stroke="#a67c2c"/><path d="M7.5 .5l3 3h-3z" fill="#f0c860"/><path d="M6.6 3.8v5.4a2.3 2.3 0 0 1-4.6 0" fill="none" stroke="#2a62aa" stroke-width="2.4"/><path d="M6.6 3.8v5.4a2.3 2.3 0 0 1-4.6 0" fill="none" stroke="#f2f6fe" stroke-width=".7"/></svg><div class="t" style="left:101px;top:326px;font-size:11.5px;letter-spacing:-.35px">DefaultExchangeRegistry.java</div><div class="a" style="left:69px;top:348px;width:13px;height:1px;background:repeating-linear-gradient(90deg,#808080 0 1px,transparent 1px 2px)"></div><svg style="left:83px;top:341px" width="12" height="15"><path d="M.5 .5h7l3 3v10h-10z" fill="#f2f6fe" stroke="#a67c2c"/><path d="M7.5 .5l3 3h-3z" fill="#f0c860"/><path d="M6.6 3.8v5.4a2.3 2.3 0 0 1-4.6 0" fill="none" stroke="#2a62aa" stroke-width="2.4"/><path d="M6.6 3.8v5.4a2.3 2.3 0 0 1-4.6 0" fill="none" stroke="#f2f6fe" stroke-width=".7"/></svg><div class="t" style="left:101px;top:343px;font-size:11.5px;letter-spacing:-.35px">DestNameExchange.java</div><div class="a" style="left:69px;top:365px;width:13px;height:1px;background:repeating-linear-gradient(90deg,#808080 0 1px,transparent 1px 2px)"></div><svg style="left:83px;top:358px" width="12" height="15"><path d="M.5 .5h7l3 3v10h-10z" fill="#f2f6fe" stroke="#a67c2c"/><path d="M7.5 .5l3 3h-3z" fill="#f0c860"/><path d="M6.6 3.8v5.4a2.3 2.3 0 0 1-4.6 0" fill="none" stroke="#2a62aa" stroke-width="2.4"/><path d="M6.6 3.8v5.4a2.3 2.3 0 0 1-4.6 0" fill="none" stroke="#f2f6fe" stroke-width=".7"/></svg><div class="t" style="left:101px;top:360px;font-size:11.5px;letter-spacing:-.35px">DestWildExchange.java</div><div class="a" style="left:69px;top:382px;width:13px;height:1px;background:repeating-linear-gradient(90deg,#808080 0 1px,transparent 1px 2px)"></div><svg style="left:83px;top:375px" width="12" height="15"><path d="M.5 .5h7l3 3v10h-10z" fill="#f2f6fe" stroke="#a67c2c"/><path d="M7.5 .5l3 3h-3z" fill="#f0c860"/><path d="M6.6 3.8v5.4a2.3 2.3 0 0 1-4.6 0" fill="none" stroke="#2a62aa" stroke-width="2.4"/><path d="M6.6 3.8v5.4a2.3 2.3 0 0 1-4.6 0" fill="none" stroke="#f2f6fe" stroke-width=".7"/></svg><div class="t" style="left:101px;top:377px;font-size:11.5px;letter-spacing:-.35px">Exchange.java</div><div class="a" style="left:69px;top:399px;width:13px;height:1px;background:repeating-linear-gradient(90deg,#808080 0 1px,transparent 1px 2px)"></div><svg style="left:83px;top:392px" width="12" height="15"><path d="M.5 .5h7l3 3v10h-10z" fill="#f2f6fe" stroke="#a67c2c"/><path d="M7.5 .5l3 3h-3z" fill="#f0c860"/><path d="M6.6 3.8v5.4a2.3 2.3 0 0 1-4.6 0" fill="none" stroke="#2a62aa" stroke-width="2.4"/><path d="M6.6 3.8v5.4a2.3 2.3 0 0 1-4.6 0" fill="none" stroke="#f2f6fe" stroke-width=".7"/></svg><div class="t" style="left:101px;top:394px;font-size:11.5px;letter-spacing:-.35px">ExchangeFactory.java</div><div class="a" style="left:69px;top:416px;width:13px;height:1px;background:repeating-linear-gradient(90deg,#808080 0 1px,transparent 1px 2px)"></div><svg style="left:83px;top:409px" width="12" height="15"><path d="M.5 .5h7l3 3v10h-10z" fill="#f2f6fe" stroke="#a67c2c"/><path d="M7.5 .5l3 3h-3z" fill="#f0c860"/><path d="M6.6 3.8v5.4a2.3 2.3 0 0 1-4.6 0" fill="none" stroke="#2a62aa" stroke-width="2.4"/><path d="M6.6 3.8v5.4a2.3 2.3 0 0 1-4.6 0" fill="none" stroke="#f2f6fe" stroke-width=".7"/></svg><div class="t" style="left:101px;top:411px;font-size:11.5px;letter-spacing:-.35px">ExchangeInUseException.java</div><div class="a" style="left:69px;top:433px;width:13px;height:1px;background:repeating-linear-gradient(90deg,#808080 0 1px,transparent 1px 2px)"></div><svg style="left:83px;top:426px" width="12" height="15"><path d="M.5 .5h7l3 3v10h-10z" fill="#f2f6fe" stroke="#a67c2c"/><path d="M7.5 .5l3 3h-3z" fill="#f0c860"/><path d="M6.6 3.8v5.4a2.3 2.3 0 0 1-4.6 0" fill="none" stroke="#2a62aa" stroke-width="2.4"/><path d="M6.6 3.8v5.4a2.3 2.3 0 0 1-4.6 0" fill="none" stroke="#f2f6fe" stroke-width=".7"/></svg><div class="t" style="left:101px;top:428px;font-size:11.5px;letter-spacing:-.35px">ExchangeRegistry.java</div><div class="a" style="left:69px;top:450px;width:13px;height:1px;background:repeating-linear-gradient(90deg,#808080 0 1px,transparent 1px 2px)"></div><svg style="left:83px;top:443px" width="12" height="15"><path d="M.5 .5h7l3 3v10h-10z" fill="#f2f6fe" stroke="#a67c2c"/><path d="M7.5 .5l3 3h-3z" fill="#f0c860"/><path d="M6.6 3.8v5.4a2.3 2.3 0 0 1-4.6 0" fill="none" stroke="#2a62aa" stroke-width="2.4"/><path d="M6.6 3.8v5.4a2.3 2.3 0 0 1-4.6 0" fill="none" stroke="#f2f6fe" stroke-width=".7"/></svg><div class="t" style="left:101px;top:445px;font-size:11.5px;letter-spacing:-.35px">FanoutExchange.java</div><div class="a" style="left:69px;top:467px;width:13px;height:1px;background:repeating-linear-gradient(90deg,#808080 0 1px,transparent 1px 2px)"></div><svg style="left:83px;top:460px" width="12" height="15"><path d="M.5 .5h7l3 3v10h-10z" fill="#f2f6fe" stroke="#a67c2c"/><path d="M7.5 .5l3 3h-3z" fill="#f0c860"/><path d="M6.6 3.8v5.4a2.3 2.3 0 0 1-4.6 0" fill="none" stroke="#2a62aa" stroke-width="2.4"/><path d="M6.6 3.8v5.4a2.3 2.3 0 0 1-4.6 0" fill="none" stroke="#f2f6fe" stroke-width=".7"/></svg><div class="t" style="left:101px;top:462px;font-size:11.5px;letter-spacing:-.35px;background:#e6e6e6;padding:1px 2px 2px 2px;margin-left:-2px;margin-top:-1px">HeadersBinding.java</div><div class="a" style="left:69px;top:484px;width:13px;height:1px;background:repeating-linear-gradient(90deg,#808080 0 1px,transparent 1px 2px)"></div><svg style="left:83px;top:477px" width="12" height="15"><path d="M.5 .5h7l3 3v10h-10z" fill="#f2f6fe" stroke="#a67c2c"/><path d="M7.5 .5l3 3h-3z" fill="#f0c860"/><path d="M6.6 3.8v5.4a2.3 2.3 0 0 1-4.6 0" fill="none" stroke="#2a62aa" stroke-width="2.4"/><path d="M6.6 3.8v5.4a2.3 2.3 0 0 1-4.6 0" fill="none" stroke="#f2f6fe" stroke-width=".7"/></svg><div class="t" style="left:101px;top:479px;font-size:11.5px;letter-spacing:-.35px">HeadersExchange.java</div><div class="a" style="left:69px;top:501px;width:13px;height:1px;background:repeating-linear-gradient(90deg,#808080 0 1px,transparent 1px 2px)"></div><svg style="left:83px;top:494px" width="12" height="15"><path d="M.5 .5h7l3 3v10h-10z" fill="#f2f6fe" stroke="#a67c2c"/><path d="M7.5 .5l3 3h-3z" fill="#f0c860"/><path d="M6.6 3.8v5.4a2.3 2.3 0 0 1-4.6 0" fill="none" stroke="#2a62aa" stroke-width="2.4"/><path d="M6.6 3.8v5.4a2.3 2.3 0 0 1-4.6 0" fill="none" stroke="#f2f6fe" stroke-width=".7"/></svg><div class="t" style="left:101px;top:496px;font-size:11.5px;letter-spacing:-.35px">Index.java</div><div class="a" style="left:69px;top:518px;width:13px;height:1px;background:repeating-linear-gradient(90deg,#808080 0 1px,transparent 1px 2px)"></div><svg style="left:83px;top:511px" width="12" height="15"><path d="M.5 .5h7l3 3v10h-10z" fill="#f2f6fe" stroke="#a67c2c"/><path d="M7.5 .5l3 3h-3z" fill="#f0c860"/><path d="M6.6 3.8v5.4a2.3 2.3 0 0 1-4.6 0" fill="none" stroke="#2a62aa" stroke-width="2.4"/><path d="M6.6 3.8v5.4a2.3 2.3 0 0 1-4.6 0" fill="none" stroke="#f2f6fe" stroke-width=".7"/></svg><div class="t" style="left:101px;top:513px;font-size:11.5px;letter-spacing:-.35px">ManagedExchange.java</div><div class="a" style="left:69px;top:535px;width:13px;height:1px;background:repeating-linear-gradient(90deg,#808080 0 1px,transparent 1px 2px)"></div><svg style="left:83px;top:528px" width="12" height="15"><path d="M.5 .5h7l3 3v10h-10z" fill="#f2f6fe" stroke="#a67c2c"/><path d="M7.5 .5l3 3h-3z" fill="#f0c860"/><path d="M6.6 3.8v5.4a2.3 2.3 0 0 1-4.6 0" fill="none" stroke="#2a62aa" stroke-width="2.4"/><path d="M6.6 3.8v5.4a2.3 2.3 0 0 1-4.6 0" fill="none" stroke="#f2f6fe" stroke-width=".7"/></svg><div class="t" style="left:101px;top:530px;font-size:11.5px;letter-spacing:-.35px">MessageRouter.java</div><div class="a" style="left:69px;top:552px;width:13px;height:1px;background:repeating-linear-gradient(90deg,#808080 0 1px,transparent 1px 2px)"></div><svg style="left:83px;top:545px" width="12" height="15"><path d="M.5 .5h7l3 3v10h-10z" fill="#f2f6fe" stroke="#a67c2c"/><path d="M7.5 .5l3 3h-3z" fill="#f0c860"/><path d="M6.6 3.8v5.4a2.3 2.3 0 0 1-4.6 0" fill="none" stroke="#2a62aa" stroke-width="2.4"/><path d="M6.6 3.8v5.4a2.3 2.3 0 0 1-4.6 0" fill="none" stroke="#f2f6fe" stroke-width=".7"/></svg><div class="t" style="left:101px;top:547px;font-size:11.5px;letter-spacing:-.35px">NoRouteException.java</div><svg style="left:46px;top:565px" width="9" height="9"><defs><linearGradient id="pmg" x1="0" y1="0" x2="1" y2="1"><stop offset="0" stop-color="#fff"/><stop offset="1" stop-color="#c8c8c8"/></linearGradient></defs><rect x=".5" y=".5" width="8" height="8" fill="url(#pmg)" stroke="#8a8a8a"/><path d="M2 4.5h5" stroke="#000"/><path d="M4.5 2v5" stroke="#000"/></svg><div class="a" style="left:56px;top:569px;width:6px;height:1px;background:repeating-linear-gradient(90deg,#808080 0 1px,transparent 1px 2px)"></div><svg style="left:62px;top:564px" width="17" height="12"><path d="M.5 10.5V2.5H2.5L3.5 .5H6.5L7.5 2.5H12.5V5.5" fill="#fbecc0" stroke="#c08434"/><path d="M.5 10.5L3.8 5.5H15.8L12.5 10.5Z" fill="#fad684" stroke="#c08434"/></svg><div class="t" style="left:81px;top:564px;font-size:11.5px;letter-spacing:-.35px">filter</div><svg style="left:46px;top:582px" width="9" height="9"><defs><linearGradient id="pmg" x1="0" y1="0" x2="1" y2="1"><stop offset="0" stop-color="#fff"/><stop offset="1" stop-color="#c8c8c8"/></linearGradient></defs><rect x=".5" y=".5" width="8" height="8" fill="url(#pmg)" stroke="#8a8a8a"/><path d="M2 4.5h5" stroke="#000"/><path d="M4.5 2v5" stroke="#000"/></svg><div class="a" style="left:56px;top:586px;width:6px;height:1px;background:repeating-linear-gradient(90deg,#808080 0 1px,transparent 1px 2px)"></div><svg style="left:62px;top:581px" width="17" height="12"><path d="M.5 10.5V2.5H2.5L3.5 .5H6.5L7.5 2.5H12.5V5.5" fill="#fbecc0" stroke="#c08434"/><path d="M.5 10.5L3.8 5.5H15.8L12.5 10.5Z" fill="#fad684" stroke="#c08434"/></svg><div class="t" style="left:81px;top:581px;font-size:11.5px;letter-spacing:-.35px">handler</div><svg style="left:46px;top:599px" width="9" height="9"><defs><linearGradient id="pmg" x1="0" y1="0" x2="1" y2="1"><stop offset="0" stop-color="#fff"/><stop offset="1" stop-color="#c8c8c8"/></linearGradient></defs><rect x=".5" y=".5" width="8" height="8" fill="url(#pmg)" stroke="#8a8a8a"/><path d="M2 4.5h5" stroke="#000"/><path d="M4.5 2v5" stroke="#000"/></svg><div class="a" style="left:56px;top:603px;width:6px;height:1px;background:repeating-linear-gradient(90deg,#808080 0 1px,transparent 1px 2px)"></div><svg style="left:62px;top:598px" width="17" height="12"><path d="M.5 10.5V2.5H2.5L3.5 .5H6.5L7.5 2.5H12.5V5.5" fill="#fbecc0" stroke="#c08434"/><path d="M.5 10.5L3.8 5.5H15.8L12.5 10.5Z" fill="#fad684" stroke="#c08434"/></svg><div class="t" style="left:81px;top:598px;font-size:11.5px;letter-spacing:-.35px">jms</div><svg style="left:46px;top:616px" width="9" height="9"><defs><linearGradient id="pmg" x1="0" y1="0" x2="1" y2="1"><stop offset="0" stop-color="#fff"/><stop offset="1" stop-color="#c8c8c8"/></linearGradient></defs><rect x=".5" y=".5" width="8" height="8" fill="url(#pmg)" stroke="#8a8a8a"/><path d="M2 4.5h5" stroke="#000"/><path d="M4.5 2v5" stroke="#000"/></svg><div class="a" style="left:56px;top:620px;width:6px;height:1px;background:repeating-linear-gradient(90deg,#808080 0 1px,transparent 1px 2px)"></div><svg style="left:62px;top:615px" width="17" height="12"><path d="M.5 10.5V2.5H2.5L3.5 .5H6.5L7.5 2.5H12.5V5.5" fill="#fbecc0" stroke="#c08434"/><path d="M.5 10.5L3.8 5.5H15.8L12.5 10.5Z" fill="#fad684" stroke="#c08434"/></svg><div class="t" style="left:81px;top:615px;font-size:11.5px;letter-spacing:-.35px">management</div><svg style="left:46px;top:633px" width="9" height="9"><defs><linearGradient id="pmg" x1="0" y1="0" x2="1" y2="1"><stop offset="0" stop-color="#fff"/><stop offset="1" stop-color="#c8c8c8"/></linearGradient></defs><rect x=".5" y=".5" width="8" height="8" fill="url(#pmg)" stroke="#8a8a8a"/><path d="M2 4.5h5" stroke="#000"/><path d="M4.5 2v5" stroke="#000"/></svg><div class="a" style="left:56px;top:637px;width:6px;height:1px;background:repeating-linear-gradient(90deg,#808080 0 1px,transparent 1px 2px)"></div><svg style="left:62px;top:632px" width="17" height="12"><path d="M.5 10.5V2.5H2.5L3.5 .5H6.5L7.5 2.5H12.5V5.5" fill="#fbecc0" stroke="#c08434"/><path d="M.5 10.5L3.8 5.5H15.8L12.5 10.5Z" fill="#fad684" stroke="#c08434"/></svg><div class="t" style="left:81px;top:632px;font-size:11.5px;letter-spacing:-.35px">output</div><svg style="left:46px;top:650px" width="9" height="9"><defs><linearGradient id="pmg" x1="0" y1="0" x2="1" y2="1"><stop offset="0" stop-color="#fff"/><stop offset="1" stop-color="#c8c8c8"/></linearGradient></defs><rect x=".5" y=".5" width="8" height="8" fill="url(#pmg)" stroke="#8a8a8a"/><path d="M2 4.5h5" stroke="#000"/><path d="M4.5 2v5" stroke="#000"/></svg><div class="a" style="left:56px;top:654px;width:6px;height:1px;background:repeating-linear-gradient(90deg,#808080 0 1px,transparent 1px 2px)"></div><svg style="left:62px;top:649px" width="17" height="12"><path d="M.5 10.5V2.5H2.5L3.5 .5H6.5L7.5 2.5H12.5V5.5" fill="#fbecc0" stroke="#c08434"/><path d="M.5 10.5L3.8 5.5H15.8L12.5 10.5Z" fill="#fad684" stroke="#c08434"/></svg><div class="t" style="left:81px;top:649px;font-size:11.5px;letter-spacing:-.35px">protocol</div><svg style="left:46px;top:667px" width="9" height="9"><defs><linearGradient id="pmg" x1="0" y1="0" x2="1" y2="1"><stop offset="0" stop-color="#fff"/><stop offset="1" stop-color="#c8c8c8"/></linearGradient></defs><rect x=".5" y=".5" width="8" height="8" fill="url(#pmg)" stroke="#8a8a8a"/><path d="M2 4.5h5" stroke="#000"/><path d="M4.5 2v5" stroke="#000"/></svg><div class="a" style="left:56px;top:671px;width:6px;height:1px;background:repeating-linear-gradient(90deg,#808080 0 1px,transparent 1px 2px)"></div><svg style="left:62px;top:666px" width="17" height="12"><path d="M.5 10.5V2.5H2.5L3.5 .5H6.5L7.5 2.5H12.5V5.5" fill="#fbecc0" stroke="#c08434"/><path d="M.5 10.5L3.8 5.5H15.8L12.5 10.5Z" fill="#fad684" stroke="#c08434"/></svg><div class="t" style="left:81px;top:666px;font-size:11.5px;letter-spacing:-.35px">queue</div><svg style="left:46px;top:684px" width="9" height="9"><defs><linearGradient id="pmg" x1="0" y1="0" x2="1" y2="1"><stop offset="0" stop-color="#fff"/><stop offset="1" stop-color="#c8c8c8"/></linearGradient></defs><rect x=".5" y=".5" width="8" height="8" fill="url(#pmg)" stroke="#8a8a8a"/><path d="M2 4.5h5" stroke="#000"/><path d="M4.5 2v5" stroke="#000"/></svg><div class="a" style="left:56px;top:688px;width:6px;height:1px;background:repeating-linear-gradient(90deg,#808080 0 1px,transparent 1px 2px)"></div><svg style="left:62px;top:683px" width="17" height="12"><path d="M.5 10.5V2.5H2.5L3.5 .5H6.5L7.5 2.5H12.5V5.5" fill="#fbecc0" stroke="#c08434"/><path d="M.5 10.5L3.8 5.5H15.8L12.5 10.5Z" fill="#fad684" stroke="#c08434"/></svg><div class="t" style="left:81px;top:683px;font-size:11.5px;letter-spacing:-.35px">registry</div>
</div>
<div class="sbv" style="left:1233px;top:133px;width:17px;height:694px"></div>
<div class="btn" style="left:1233px;top:133px;width:16px;height:17px"></div>
<svg style="left:1236px;top:138px" width="10" height="8" viewBox="0 0 10 8"><path d="M1 6l4-4 4 4" stroke="#4a5870" stroke-width="2" fill="none"/></svg>
<div class="thv" style="left:1233px;top:183px;width:16px;height:330px"></div>
<svg style="left:1237px;top:345px" width="8" height="6" viewBox="0 0 8 6"><path d="M0 .5h8M0 2.5h8M0 4.5h8" stroke="#808080"/></svg>
<div class="btn" style="left:1233px;top:810px;width:16px;height:17px"></div>
<svg style="left:1236px;top:815px" width="10" height="8" viewBox="0 0 10 8"><path d="M1 2l4 4 4-4" stroke="#4a5870" stroke-width="2" fill="none"/></svg>
<div class="sbh" style="left:959px;top:827px;width:274px;height:17px"></div>
<div class="btn" style="left:959px;top:827px;width:16px;height:17px"></div>
<svg style="left:963px;top:831px" width="8" height="10" viewBox="0 0 8 10"><path d="M6 1l-4 4 4 4" stroke="#4a5870" stroke-width="2" fill="none"/></svg>
<div class="thh" style="left:1054px;top:827px;width:162px;height:17px"></div>
<svg style="left:1132px;top:832px" width="6" height="8" viewBox="0 0 6 8"><path d="M.5 0v8M2.5 0v8M4.5 0v8" stroke="#808080"/></svg>
<div class="btn" style="left:1216px;top:827px;width:16px;height:17px"></div>
<svg style="left:1220px;top:831px" width="8" height="10" viewBox="0 0 8 10"><path d="M2 1l4 4-4 4" stroke="#4a5870" stroke-width="2" fill="none"/></svg>
<div class="a" style="left:1233px;top:827px;width:17px;height:17px;background:#e3e3e3"></div>
<svg style="left:994px;top:852px" width="3" height="16"><path d="M0 3.5L1.5 2L3 3.5" stroke="#a4a4a4" stroke-width="1" fill="none"/><path d="M0 4.5L1.5 3L3 4.5" stroke="#ffffff" stroke-width="1" fill="none" opacity=".9"/><path d="M0 7.5L1.5 6L3 7.5" stroke="#a4a4a4" stroke-width="1" fill="none"/><path d="M0 8.5L1.5 7L3 8.5" stroke="#ffffff" stroke-width="1" fill="none" opacity=".9"/><path d="M0 11.5L1.5 10L3 11.5" stroke="#a4a4a4" stroke-width="1" fill="none"/><path d="M0 12.5L1.5 11L3 12.5" stroke="#ffffff" stroke-width="1" fill="none" opacity=".9"/><path d="M0 15.5L1.5 14L3 15.5" stroke="#a4a4a4" stroke-width="1" fill="none"/><path d="M0 16.5L1.5 15L3 16.5" stroke="#ffffff" stroke-width="1" fill="none" opacity=".9"/></svg>
</body></html>
